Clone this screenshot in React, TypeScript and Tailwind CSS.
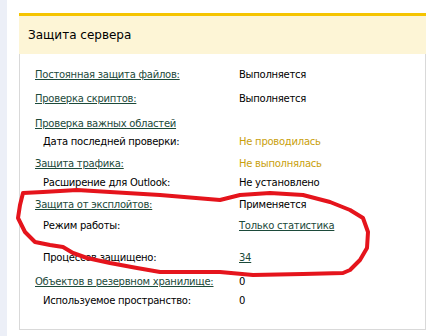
import React from "react";

type Row = {
  label: string;
  value?: string;
  link?: boolean;
  sub?: boolean;
  tone?: "plain" | "warn" | "link";
  mt: string;
};

const rows: Row[] = [
  { label: "Постоянная защита файлов:", value: "Выполняется", link: true, mt: "mt-0" },
  { label: "Проверка скриптов:", value: "Выполняется", link: true, mt: "mt-[6px]" },
  { label: "Проверка важных областей", link: true, mt: "mt-[7px]" },
  { label: "Дата последней проверки:", value: "Не проводилась", sub: true, tone: "warn", mt: "mt-0" },
  { label: "Защита трафика:", value: "Не выполнялась", link: true, tone: "warn", mt: "mt-[4px]" },
  { label: "Расширение для Outlook:", value: "Не установлено", sub: true, mt: "mt-[1px]" },
  { label: "Защита от эксплойтов:", value: "Применяется", link: true, mt: "mt-[4px]" },
  { label: "Режим работы:", value: "Только статистика", sub: true, tone: "link", mt: "mt-[3px]" },
  { label: "Процессов защищено:", value: "34", sub: true, tone: "link", mt: "mt-[14px]" },
  { label: "Объектов в резервном хранилище:", value: "0", link: true, mt: "mt-[6px]" },
  { label: "Используемое пространство:", value: "0", sub: true, mt: "mt-[1px]" },
];

// hand-drawn marker loop around the exploit block
const loop = [
  [23, 193], [43, 192], [77, 190], [110, 192], [160, 195], [220, 200], [240, 195],
  [270, 193], [303, 195], [330, 202], [350, 210], [363, 218], [368, 232], [367, 248],
  [360, 260], [350, 270], [343, 273], [303, 274], [253, 275], [220, 272], [160, 272],
  [137, 268], [110, 263], [87, 258], [73, 253], [63, 247], [50, 245], [35, 242],
  [25, 232], [18, 218], [20, 205], [23, 193],
];

export default function App() {
  return (
    <div className="relative w-[432px] h-[336px] bg-white overflow-hidden flex" style={{ fontFamily: '"DejaVu Sans", Verdana, sans-serif' }}>
      <div className="w-[7px] h-full bg-[#eceff7]" />

      <div className="ml-[12px] mt-[13px] w-[407px] h-[317px] flex flex-col">
        <div className="border-t-[3px] border-[#f5c400] bg-[#fdf5d6] h-[41px] flex items-center pl-[9px] pr-px">
          <span className="text-[12px] text-black">Защита сервера</span>
        </div>

        <div className="flex-1 border-x border-b border-[#d9d9d9] bg-white pt-[12px] pl-[15px]">
          {rows.map((r) => (
            <div key={r.label} className={`flex h-[18px] items-center text-[10px] leading-[18px] tracking-[-0.25px] ${r.mt}`}>
              <div className={`w-[204px] shrink-0 ${r.sub ? "pl-[8px]" : ""}`}>
                {r.link ? (
                  <span className="text-[#1c4a3a] underline underline-offset-[1px]">{r.label}</span>
                ) : (
                  <span className="text-black">{r.label}</span>
                )}
              </div>
              {r.value && (
                <span
                  className={
                    r.tone === "warn"
                      ? "text-[#c9a00c]"
                      : r.tone === "link"
                      ? "text-[#1c4a3a] underline underline-offset-[1px]"
                      : "text-black"
                  }
                >
                  {r.value}
                </span>
              )}
            </div>
          ))}
        </div>
      </div>

      <svg className="absolute inset-0 pointer-events-none" width="432" height="336" viewBox="0 0 432 336">
        <polyline
          points={loop.map((p) => p.join(",")).join(" ")}
          fill="none"
          stroke="#e5141c"
          strokeWidth="4"
          strokeLinejoin="round"
          strokeLinecap="round"
        />
      </svg>
    </div>
  );
}
